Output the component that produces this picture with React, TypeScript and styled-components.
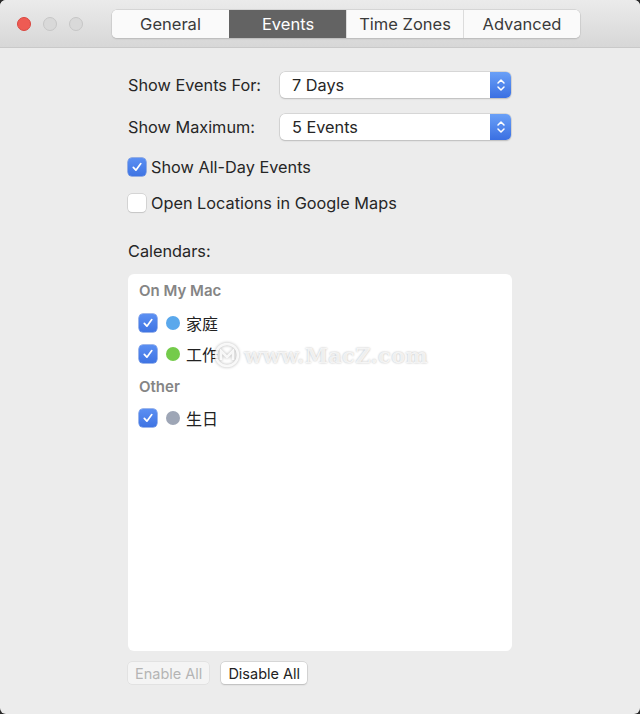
import React from "react";
import styled, { createGlobalStyle } from "styled-components";

const Global = createGlobalStyle`
  html, body { margin: 0; padding: 0; background: #2a2a2a; }
  body { font-family: Inter, "Noto Sans", "Noto Sans CJK SC", sans-serif; }
`;

const Window = styled.div`
  position: relative;
  width: 640px;
  height: 714px;
  background: #ececec;
  border-radius: 6px;
  overflow: hidden;
  display: flex;
  flex-direction: column;
`;

const TitleBar = styled.div`
  height: 48px;
  flex: 0 0 48px;
  border-bottom: 1px solid #c9c9c9;
  background: linear-gradient(#ebebeb, #d7d7d7);
  display: flex;
  align-items: center;
  padding: 1px 0 0 17px;
  box-sizing: border-box;
`;

const Lights = styled.div`
  display: flex;
  gap: 12px;
  width: 95px;
`;

const Light = styled.span<{ $c: string; $b: string }>`
  width: 14px;
  height: 14px;
  border-radius: 50%;
  background: ${(p) => p.$c};
  border: 1px solid ${(p) => p.$b};
  box-sizing: border-box;
`;

const Segments = styled.div`
  display: flex;
  height: 28px;
  border-radius: 5px;
  overflow: hidden;
  box-shadow: 0 0 0 0.5px #c4c4c4, 0 1px 1.5px rgba(0, 0, 0, 0.18);
  background: #fafafa;
`;

const Segment = styled.div<{ $active?: boolean }>`
  width: 117px;
  box-sizing: border-box;
  display: flex;
  align-items: center;
  justify-content: center;
  font-size: 16.5px;
  color: ${(p) => (p.$active ? "#fff" : "#3a3a3a")};
  background: ${(p) => (p.$active ? "#636363" : "#fafafa")};
  border-left: 1px solid ${(p) => (p.$active ? "#636363" : "#dcdcdc")};
  &:first-child { border-left: none; }
`;

const Body = styled.div`
  padding: 0 0 0 128px;
  display: flex;
  flex-direction: column;
  color: #262626;
  font-size: 16.3px;
`;

const FormRow = styled.div<{ $top: number }>`
  display: flex;
  align-items: center;
  height: 26px;
  margin-top: ${(p) => p.$top}px;
`;

const Label = styled.div`
  width: 152px;
`;

const Popup = styled.div`
  width: 231px;
  height: 26px;
  background: #fff;
  border-radius: 5px;
  box-shadow: 0 0 0 0.5px #c2c2c2, 0 1px 1.5px rgba(0, 0, 0, 0.2);
  display: flex;
  align-items: center;
  box-sizing: border-box;
  padding-left: 12px;
  overflow: hidden;
`;

const PopupText = styled.div`
  flex: 1;
`;

const Stepper = styled.div`
  width: 21px;
  height: 26px;
  background: linear-gradient(#6aa0f7, #3a6fe2);
  display: flex;
  align-items: center;
  justify-content: center;
`;

const CheckRow = styled.label<{ $top: number }>`
  display: flex;
  align-items: center;
  gap: 5px;
  height: 20px;
  margin-top: ${(p) => p.$top}px;
`;

const Box = styled.span<{ $on?: boolean }>`
  width: 18px;
  height: 18px;
  border-radius: 4px;
  box-sizing: border-box;
  display: flex;
  align-items: center;
  justify-content: center;
  background: ${(p) => (p.$on ? "linear-gradient(#5b8ff2, #3f74e3)" : "#fff")};
  box-shadow: ${(p) =>
    p.$on ? "0 0 0 0.5px #3d6fd8" : "0 0 0 0.5px #bdbdbd, 0 1px 1px rgba(0,0,0,0.12)"};
`;

const Section = styled.div`
  margin-top: 28px;
  height: 20px;
  display: flex;
  align-items: center;
`;

const ListBox = styled.div`
  margin-top: 13px;
  width: 384px;
  height: 377px;
  background: #fff;
  border-radius: 6px;
  box-sizing: border-box;
  padding: 7px 11px;
  display: flex;
  flex-direction: column;
`;

const Group = styled.div<{ $top: number }>`
  font-size: 15px;
  font-weight: 600;
  color: #858585;
  height: 18px;
  display: flex;
  align-items: center;
  margin-top: ${(p) => p.$top}px;
`;

const CalRow = styled.div<{ $top: number }>`
  display: flex;
  align-items: center;
  height: 20px;
  margin-top: ${(p) => p.$top}px;
  font-family: "Noto Sans CJK SC", sans-serif;
  font-size: 16px;
  color: #222;
`;

const Dot = styled.span<{ $c: string }>`
  width: 14px;
  height: 14px;
  border-radius: 50%;
  background: ${(p) => p.$c};
  margin-left: 9px;
  margin-right: 6px;
`;

const Buttons = styled.div`
  display: flex;
  gap: 12px;
  margin-top: 11px;
`;

const Btn = styled.div<{ $disabled?: boolean }>`
  height: 22px;
  padding: 0 7px;
  display: flex;
  align-items: center;
  border-radius: 4px;
  font-size: 14.5px;
  background: ${(p) => (p.$disabled ? "#f4f4f4" : "#fff")};
  color: ${(p) => (p.$disabled ? "#b4b4b4" : "#222")};
  box-shadow: ${(p) =>
    p.$disabled
      ? "0 0 0 0.5px #d8d8d8"
      : "0 0 0 0.5px #c2c2c2, 0 1px 1.5px rgba(0,0,0,0.2)"};
`;

const Watermark = styled.div`
  position: absolute;
  left: 214px;
  top: 342px;
  display: flex;
  align-items: center;
  gap: 4px;
  font-family: "DejaVu Serif", serif;
  font-weight: bold;
  font-size: 21px;
  color: rgba(255, 255, 255, 0.8);
  text-shadow: 0 0 2px rgba(0, 0, 0, 0.3);
  letter-spacing: 0.3px;
  pointer-events: none;
  svg { filter: drop-shadow(0 0 1.5px rgba(0, 0, 0, 0.35)); }
`;

const Check = () => (
  <svg width="12" height="12" viewBox="0 0 12 12">
    <path d="M2.3 6.4 L4.9 9.2 L9.8 2.6" fill="none" stroke="#fff" strokeWidth="1.7" strokeLinecap="round" strokeLinejoin="round" />
  </svg>
);

const Chevrons = () => (
  <svg width="10" height="16" viewBox="0 0 10 16">
    <path d="M2 6 L5 3 L8 6 M2 10 L5 13 L8 10" fill="none" stroke="#fff" strokeWidth="1.5" strokeLinecap="round" strokeLinejoin="round" />
  </svg>
);

export default function App() {
  return (
    <>
      <Global />
      <Window>
        <TitleBar>
          <Lights>
            <Light $c="#ee5b53" $b="#d9463f" />
            <Light $c="#d9d9d9" $b="#c6c6c6" />
            <Light $c="#d9d9d9" $b="#c6c6c6" />
          </Lights>
          <Segments>
            <Segment>General</Segment>
            <Segment $active>Events</Segment>
            <Segment>Time Zones</Segment>
            <Segment>Advanced</Segment>
          </Segments>
        </TitleBar>
        <Body>
          <FormRow $top={24}>
            <Label>Show Events For:</Label>
            <Popup>
              <PopupText>7 Days</PopupText>
              <Stepper><Chevrons /></Stepper>
            </Popup>
          </FormRow>
          <FormRow $top={16}>
            <Label>Show Maximum:</Label>
            <Popup>
              <PopupText>5 Events</PopupText>
              <Stepper><Chevrons /></Stepper>
            </Popup>
          </FormRow>
          <CheckRow $top={17}>
            <Box $on><Check /></Box>
            Show All-Day Events
          </CheckRow>
          <CheckRow $top={16}>
            <Box />
            Open Locations in Google Maps
          </CheckRow>
          <Section>Calendars:</Section>
          <ListBox>
            <Group $top={0}>On My Mac</Group>
            <CalRow $top={14}>
              <Box $on><Check /></Box>
              <Dot $c="#5aa8ec" />家庭
            </CalRow>
            <CalRow $top={11}>
              <Box $on><Check /></Box>
              <Dot $c="#74cb4b" />工作
            </CalRow>
            <Group $top={13}>Other</Group>
            <CalRow $top={13}>
              <Box $on><Check /></Box>
              <Dot $c="#9ea6b6" />生日
            </CalRow>
          </ListBox>
          <Buttons>
            <Btn $disabled>Enable All</Btn>
            <Btn>Disable All</Btn>
          </Buttons>
        </Body>
        <Watermark>
          <svg width="26" height="26" viewBox="0 0 26 26">
            <circle cx="13" cy="13" r="11" fill="none" stroke="rgba(255,255,255,0.85)" strokeWidth="2.5" />
            <path d="M7 18 V9 L13 15 L19 9 V18" fill="none" stroke="rgba(255,255,255,0.85)" strokeWidth="2.5" />
          </svg>
          <span>www.MacZ.com</span>
        </Watermark>
      </Window>
    </>
  );
}
